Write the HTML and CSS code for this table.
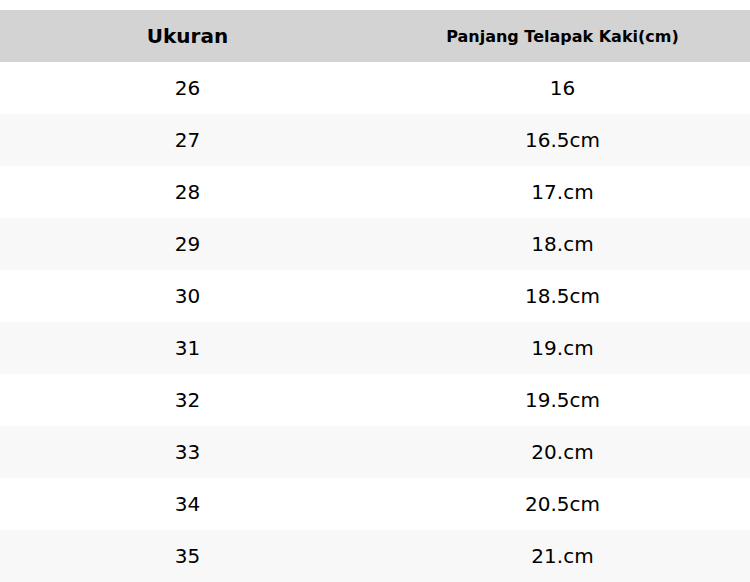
FILE: index.html
```html
<!DOCTYPE html>
<html>
<head>
<meta charset="utf-8">
<link rel="stylesheet" href="styles.css">
</head>
<body>
<table class="size-table">
  <thead>
    <tr><th class="h-size">Ukuran</th><th class="h-len">Panjang Telapak Kaki(cm)</th></tr>
  </thead>
  <tbody>
    <tr><td>26</td><td>16</td></tr>
    <tr><td>27</td><td>16.5cm</td></tr>
    <tr><td>28</td><td>17.cm</td></tr>
    <tr><td>29</td><td>18.cm</td></tr>
    <tr><td>30</td><td>18.5cm</td></tr>
    <tr><td>31</td><td>19.cm</td></tr>
    <tr><td>32</td><td>19.5cm</td></tr>
    <tr><td>33</td><td>20.cm</td></tr>
    <tr><td>34</td><td>20.5cm</td></tr>
    <tr><td>35</td><td>21.cm</td></tr>
  </tbody>
</table>
</body>
</html>
```

FILE: styles.css
```css
html, body {
  margin: 0;
  padding: 0;
  background: #fff;
}
body {
  padding-top: 10px;
  font-family: "DejaVu Sans", sans-serif;
  color: #000;
}
.size-table {
  width: 750px;
  border-collapse: collapse;
  table-layout: fixed;
}
.size-table th,
.size-table td {
  height: 52px;
  padding: 0;
  text-align: center;
  vertical-align: middle;
}
.size-table thead tr {
  background: #d3d3d3;
}
.h-size {
  font-size: 20px;
  font-weight: bold;
}
.h-len {
  font-size: 16px;
  font-weight: bold;
}
.size-table td {
  font-size: 20px;
}
.size-table tbody tr:nth-child(even) {
  background: #f8f8f8;
}
```
